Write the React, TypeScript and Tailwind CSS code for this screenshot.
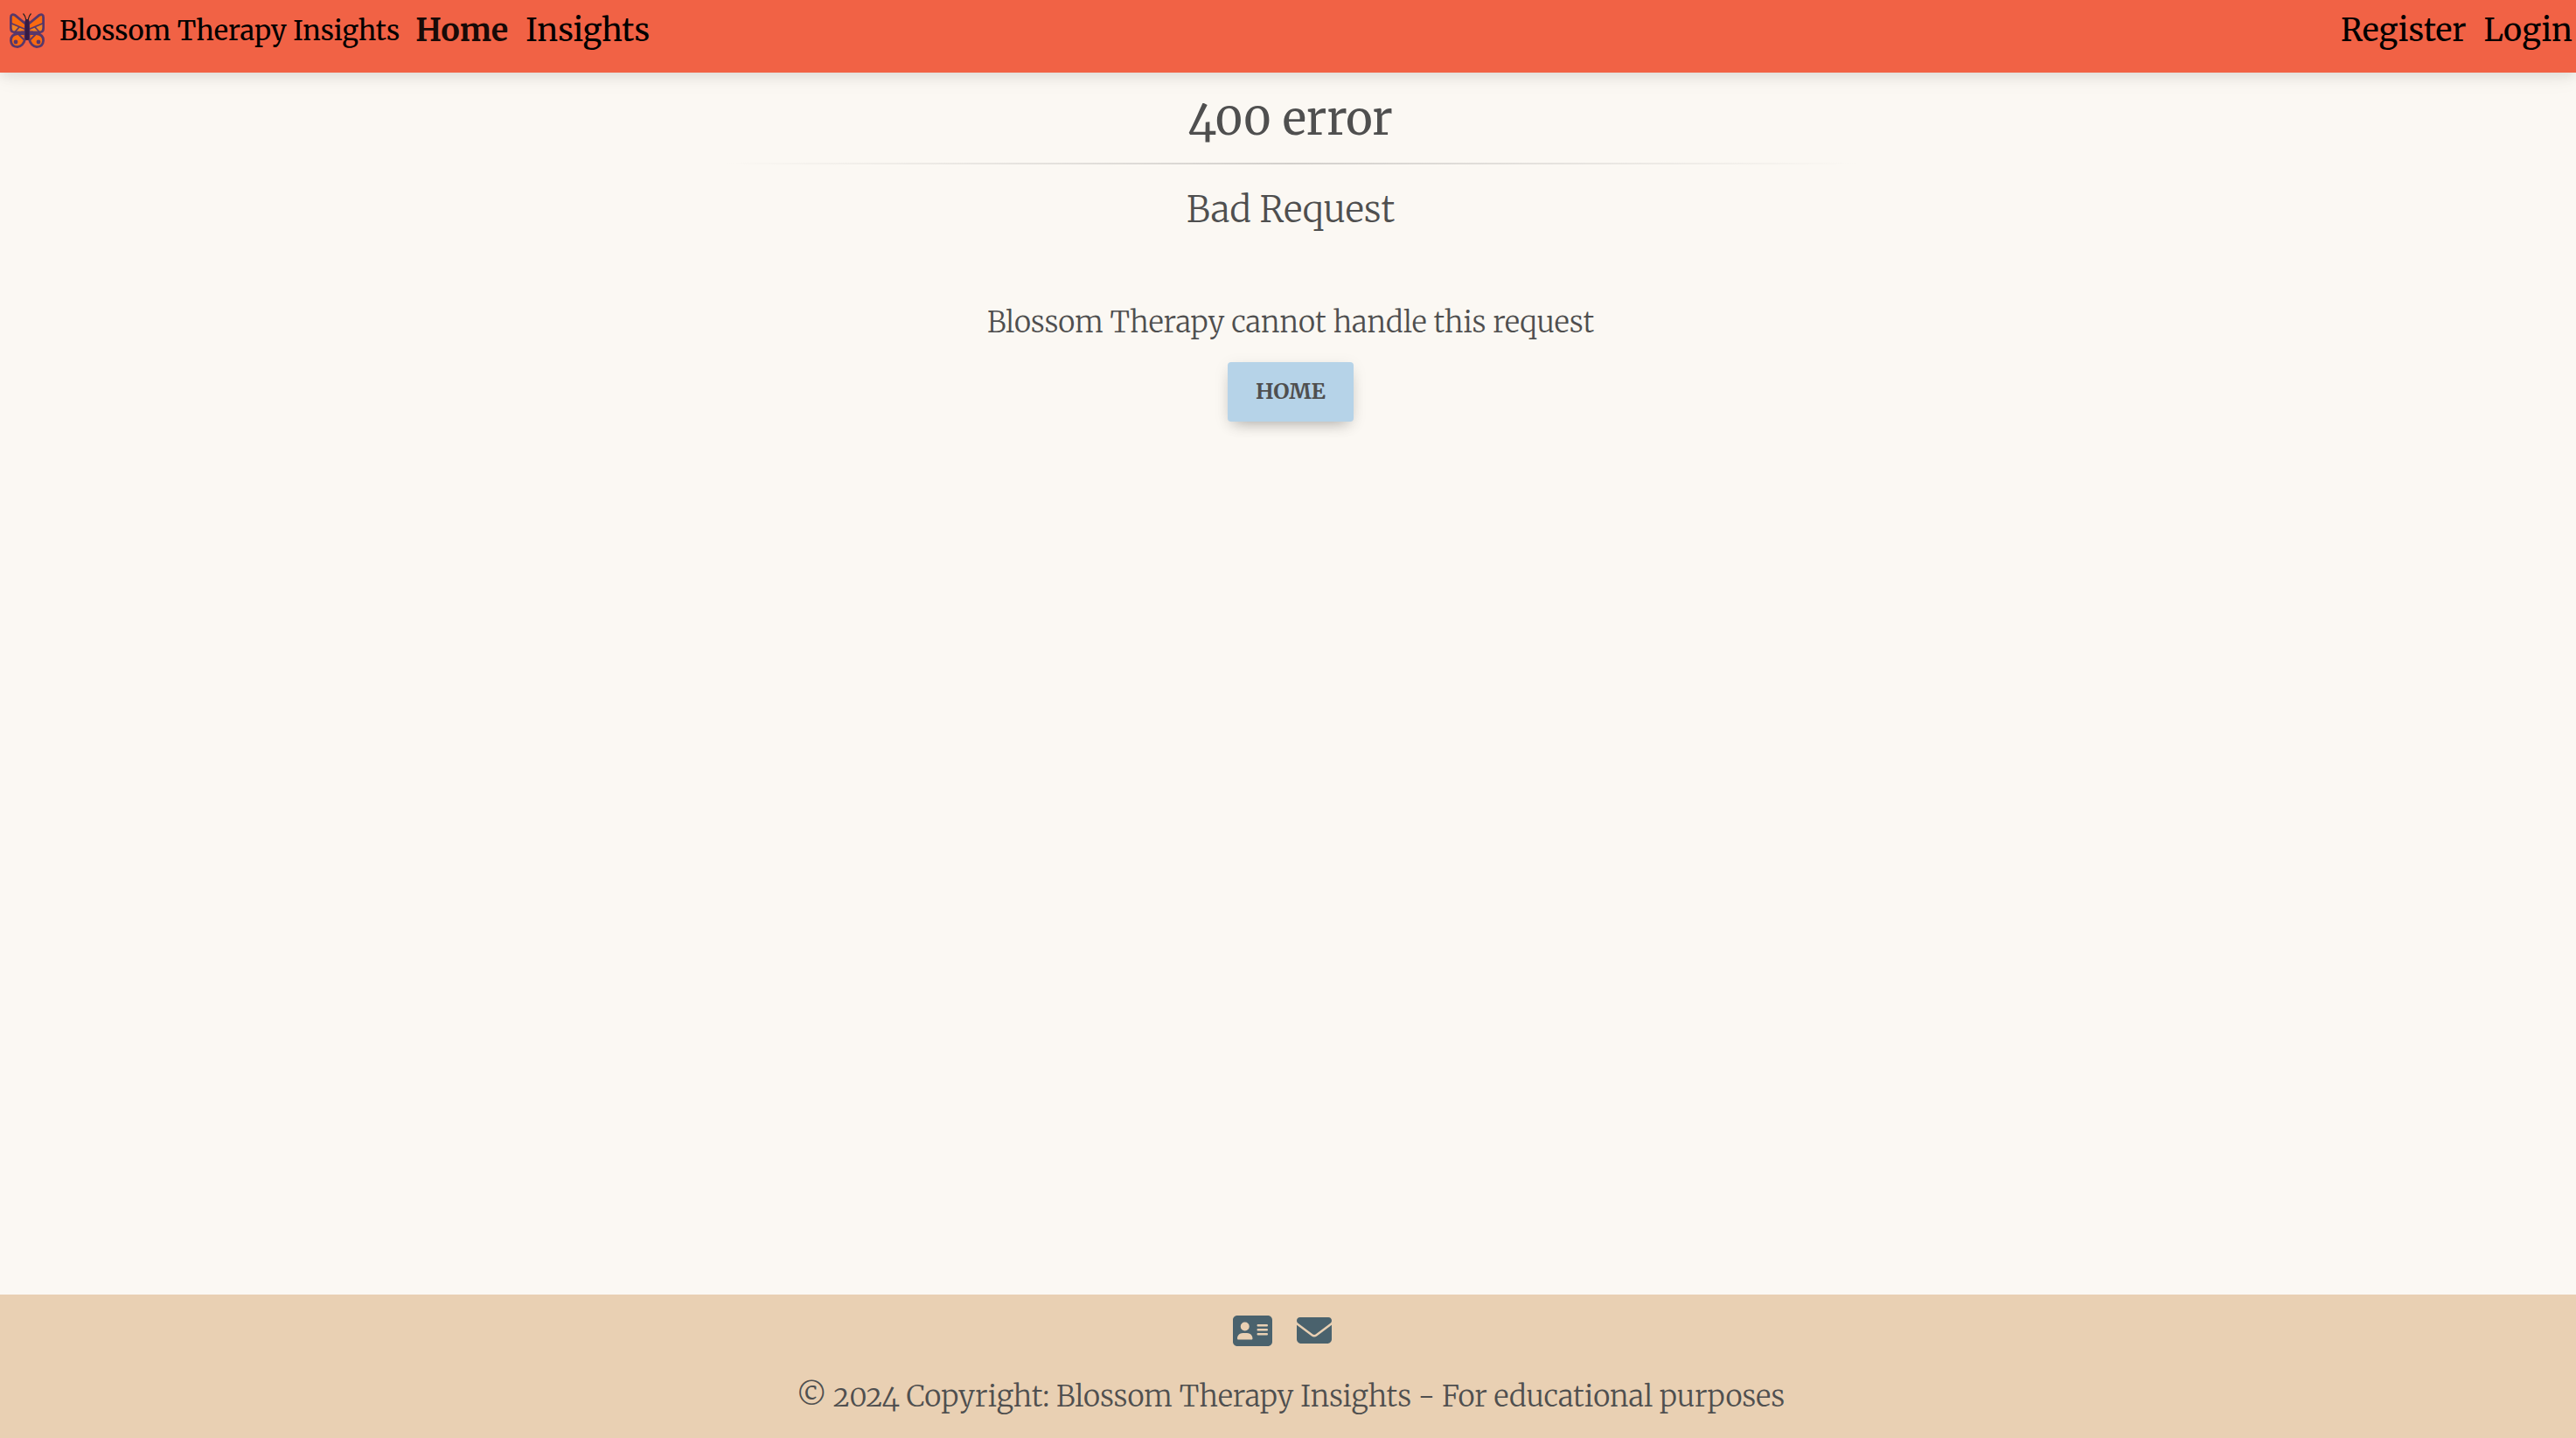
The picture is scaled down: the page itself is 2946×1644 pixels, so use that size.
import { FaAddressCard, FaEnvelope } from "react-icons/fa6";

function Wing() {
  return (
    <g stroke="#58376a" strokeWidth="2.8" strokeLinejoin="round">
      <path d="M18.5 12.5 L6.5 2.6 Q1.4 0 1.4 5 V17 Q1.4 21.5 5 21.5 L18 22Z" fill="#f96a10" />
      <path d="M2.8 13 L17 19 L12.5 20.5 H4.5 Q2.8 20 2.8 17Z" fill="#f08223" stroke="none" />
      <path d="M1.5 11.5 L18 18.5 M6 21.5 L11 16" fill="none" strokeWidth="1.8" />
      <path d="M18 23.5 H9 Q1.4 24.5 1.4 31.5 Q2 38.600 9 38.600 Q15.500 38 18 29Z" fill="#f96a10" />
      <path d="M10 24 L17 31" fill="none" strokeWidth="1.8" />
      <circle cx="7" cy="33" r="2.400" fill="#58376a" stroke="none" />
    </g>
  );
}

function Butterfly() {
  return (
    <svg viewBox="0 0 40 40" className="size-10 shrink-0" aria-hidden="true">
      <Wing />
      <g transform="matrix(-1 0 0 1 40 0)">
        <Wing />
      </g>
      <rect x="17.5" y="7" width="5" height="24" rx="2.2" fill="#351b45" />
      <path d="M19 8 Q18 3 15.5 0.5 M21 8 Q22 3 24.5 0.5" fill="none" stroke="#222" strokeWidth="1.2" />
    </svg>
  );
}

export default function App() {
  return (
    <div className="flex min-h-screen flex-col bg-[#fbf8f3] font-['Merriweather','Liberation_Serif',serif] font-light text-[#4f4f4f] [font-feature-settings:'onum']">
      <header className="relative bg-[#f16245] font-normal shadow-[0_4px_12px_rgba(0,0,0,0.07),0_4px_24px_rgba(0,0,0,0.07)]">
        <nav className="flex h-[83px] items-start justify-between pl-[7px] pr-1 pt-2 text-black">
          <div className="flex h-[54px] items-center">
            <a href="#" className="mr-[18px] flex items-center gap-[17px] pl-1 text-[31px]">
              <Butterfly />
              Blossom Therapy Insights
            </a>
            <a href="#" className="mr-5 text-[36px] font-bold text-[#180a07]">Home</a>
            <a href="#" className="text-[36px]">Insights</a>
          </div>
          <div className="flex h-[54px] items-center gap-5 text-[36px]">
            <a href="#">Register</a>
            <a href="#">Login</a>
          </div>
        </nav>
      </header>

      <main className="flex flex-1 flex-col items-center pl-[6px] pt-[21px] text-center">
        <h1 className="text-[52px] leading-[64px] font-normal">400 error</h1>
        <hr className="mt-[18px] h-[2px] w-full max-w-[1296px] border-0 bg-linear-to-r from-transparent via-[#d3d0cc] to-transparent" />
        <h2 className="mt-6 text-[41px] leading-[56px]">Bad Request</h2>
        <p className="mt-[77px] text-[33px] leading-[48px]">Blossom Therapy cannot handle this request</p>
        <button type="button" className="mt-[21px] h-[68px] rounded-[4px] bg-[#b6d3e8] px-8 text-[25px] font-bold shadow-[0_8px_18px_-8px_rgba(0,0,0,0.3),0_4px_18px_rgba(0,0,0,0.08)]">
          HOME
        </button>
      </main>

      <footer className="flex h-[164px] flex-col items-center bg-[#e9d0b3] pl-[6px]">
        <div className="mr-5 mt-[21px] flex h-10 items-center gap-7 text-[#4a626d]">
          <a href="#" aria-label="Contact card"><FaAddressCard className="size-[45px]" /></a>
          <a href="#" aria-label="Email"><FaEnvelope className="size-10" /></a>
        </div>
        <p className="mt-8 text-[33px] leading-[48px]">© 2024 Copyright: Blossom Therapy Insights - For educational purposes</p>
      </footer>
    </div>
  );
}
